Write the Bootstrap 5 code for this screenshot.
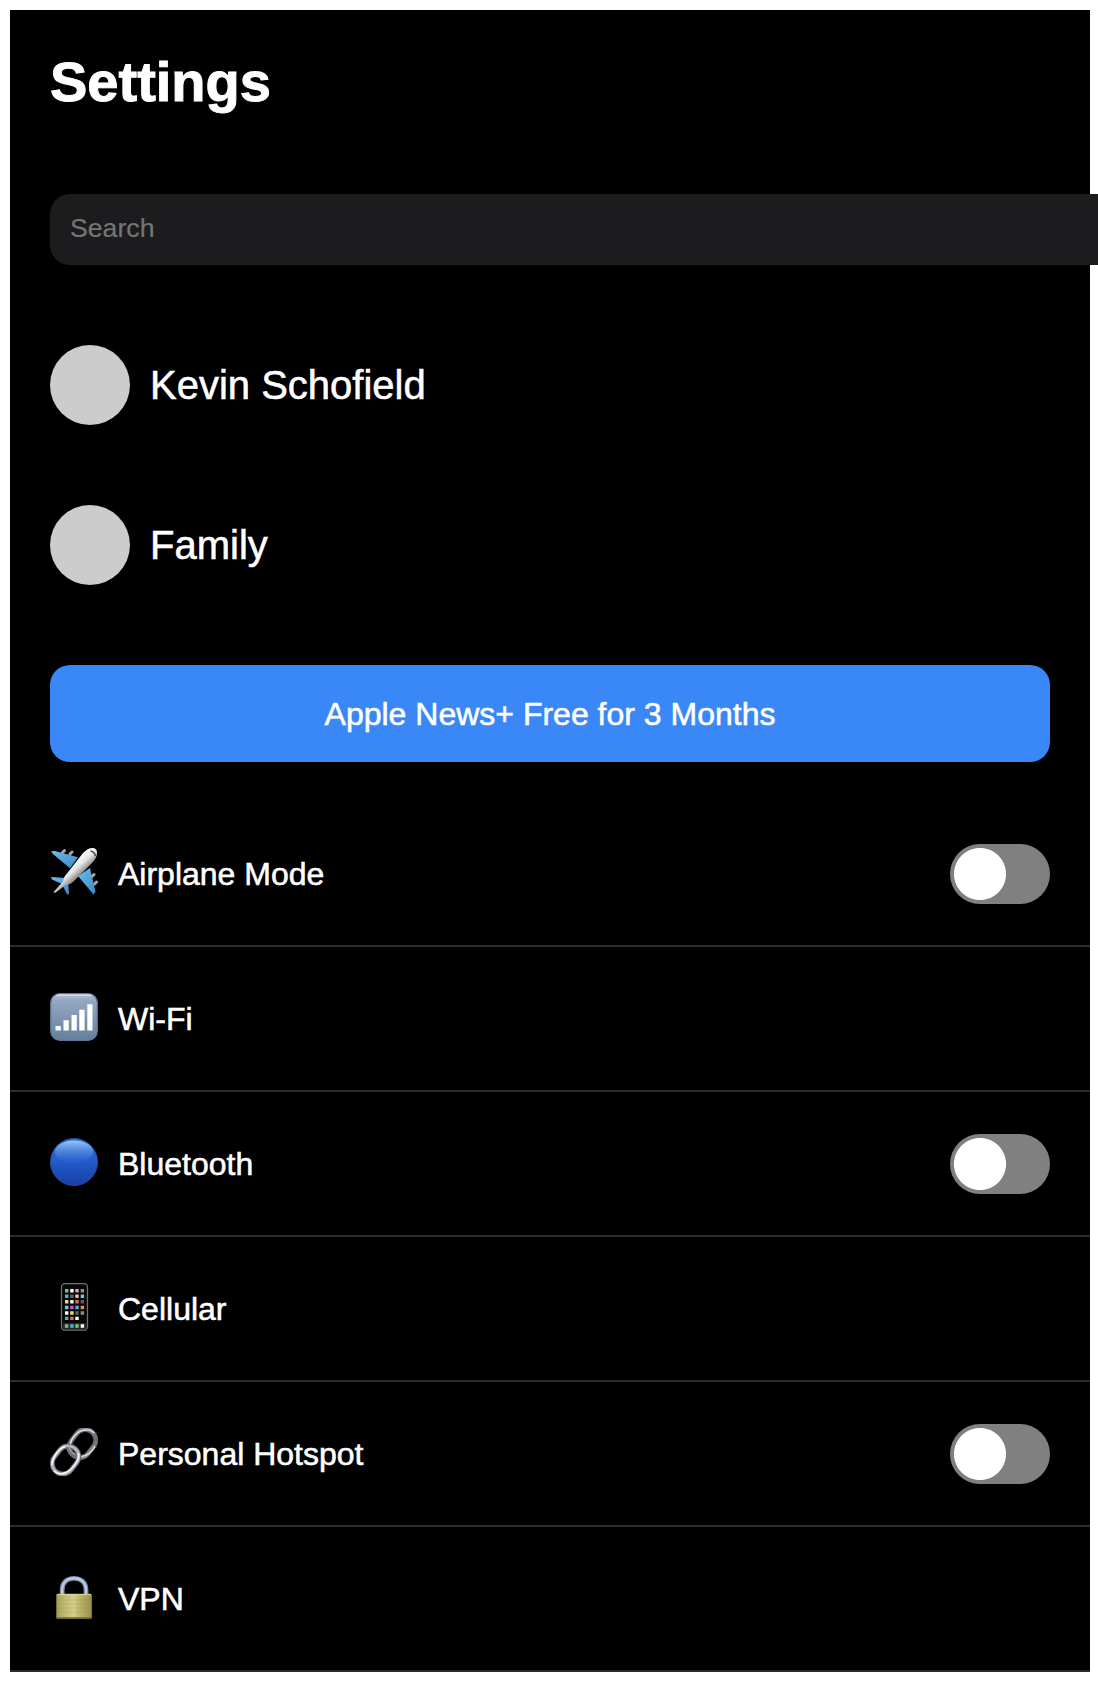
<!DOCTYPE html>
<html lang="en">
<head>
<meta charset="utf-8">
<meta name="viewport" content="width=device-width, initial-scale=1">
<title>Settings</title>
<link href="https://cdn.jsdelivr.net/npm/bootstrap@5.3.0/dist/css/bootstrap.min.css" rel="stylesheet">
<style>
html, body { overflow: hidden; }
body { padding: 10px 8px 32px 10px; background: #fff; font-family: "Liberation Sans", Arial, sans-serif; }
.panel { background: #000; color: #fff; height: 1662px; -webkit-text-stroke: .55px #fff; }
.title { font-size: 56px; line-height: 64px; padding: 40px 40px 0; height: 184px; -webkit-text-stroke: 1px #fff; }
.search-wrap { padding: 0 40px; height: 151px; }
.search-field { width: 1080px; height: 71px; flex: none; border: 0; border-radius: 20px; background: #1c1c1e; color: #fff; padding: 0 20px 2px; font-size: 26.67px; -webkit-text-stroke: .2px #757575; }
.search-field:focus { background: #1c1c1e; color: #fff; box-shadow: none; }
.search-field::placeholder { color: #757575; opacity: 1; }
.person { height: 80px; margin: 0 40px 80px; gap: 20px; font-size: 40px; line-height: 46px; }
.avatar { width: 80px; height: 80px; background: #ccc; }
.promo { height: 97px; margin: 0 40px 40px; border-radius: 20px; background: #3a87f7; font-size: 32px; line-height: 37px; padding-top: 1px; }
.list-group > .setting { height: 145px; padding: 0 40px; border: 0; border-bottom: 2px solid #2c2c2e; border-radius: 0; background: transparent; color: #fff; font-size: 32px; line-height: 37px; }
.glyph { width: 48px; height: 48px; margin: 0 20px 3px 0; flex: none; }
.setting .label-text { padding-top: 2px; }
.setting .toggle[type=checkbox] { width: 100px; height: 60px; margin: 1px 0 0 auto; border: 0; border-radius: 30px; background-color: #808080; background-image: radial-gradient(circle at 30px 30px, #fff 25.6px, transparent 26.4px); background-size: 100px 60px; background-position: 0 0; flex: none; appearance: none; }
.setting .toggle[type=checkbox]:checked { background-color: #34c759; background-image: radial-gradient(circle at 70px 30px, #fff 25.6px, transparent 26.4px); }
</style>
<script src="https://cdn.jsdelivr.net/npm/bootstrap@5.3.0/dist/js/bootstrap.bundle.min.js"></script>
</head>
<body>
<main class="panel">
  <h1 class="title fw-bold m-0">Settings</h1>
  <div class="search-wrap d-flex align-items-start">
    <input class="form-control search-field" type="text" placeholder="Search">
  </div>
  <div class="person d-flex align-items-center"><div class="avatar rounded-circle"></div><div>Kevin Schofield</div></div>
  <div class="person d-flex align-items-center"><div class="avatar rounded-circle"></div><div>Family</div></div>
  <div class="promo d-flex align-items-center justify-content-center">Apple News+ Free for 3 Months</div>

  <div class="list-group">
    <div class="list-group-item setting d-flex align-items-center">
      <svg class="glyph" viewBox="0 0 48 48">
        <defs>
          <linearGradient id="fuselage" gradientUnits="userSpaceOnUse" x1="21" y1="15" x2="31" y2="26"><stop offset="0" stop-color="#fff"/><stop offset=".5" stop-color="#e8e6e6"/><stop offset="1" stop-color="#8f8b8b"/></linearGradient>
          <linearGradient id="wing" x1="0" y1="0" x2="1" y2="1"><stop offset="0" stop-color="#6dbdea"/><stop offset="1" stop-color="#3b88c6"/></linearGradient>
        </defs>
        <g stroke="#a9a5a5" stroke-width="3" stroke-linecap="round"><path d="M12.500 4.500l2-2M20 6l2-2M42 28.500l2-2M44.500 36l2-2"/></g>
        <path d="M1 3.500l3-.7 24 6.500-8 11L3 6z" fill="url(#wing)"/>
        <path d="M40 20l5.500 24-2 2.500L28 28z" fill="url(#wing)"/>
        <path d="M1 29l16 1-4 6.500L2 31.500zM12 36l6-5 1 15-2 .5z" fill="url(#wing)"/>
        <path d="M46 1.500c2.700 3.500 0 9-3.500 13L23 34c-3 2.300-6 3-8 3.500L5 45 3.500 44 13 33.500c.5-3.500 1.500-5.500 4-8L33 5c4.500-4.500 10-6.500 13-3.500z" fill="url(#fuselage)"/>
        <path d="M40.500 3c2.700.5 4.500 2.500 5 5.200" fill="none" stroke="#4a4a50" stroke-width="1.600"/>
      </svg>
      <span class="label-text">Airplane Mode</span>
      <input class="form-check-input toggle" type="checkbox" aria-label="Airplane Mode">
    </div>
    <div class="list-group-item setting d-flex align-items-center">
      <svg class="glyph" viewBox="0 0 48 48">
        <defs><linearGradient id="signal" x1="0" y1="0" x2="0" y2="1"><stop offset="0" stop-color="#b5c4d8"/><stop offset=".15" stop-color="#93a8c2"/><stop offset="1" stop-color="#657f9f"/></linearGradient></defs>
        <rect x=".7" y=".7" width="46.600" height="46.600" rx="9" fill="url(#signal)" stroke="#617894" stroke-width="1.200"/>
        <path d="M7 2.200h34" stroke="#d4deea" stroke-width="1.400" stroke-linecap="round"/>
        <path d="M5.500 33h5.300v4.500H5.500zM13.500 27.300h5.300v10.200h-5.300zM21.500 22h5.300v15.500h-5.300zM29.300 16.700h5.300v20.800h-5.300zM37.300 11.300h5.200v26.200h-5.200z" fill="#fff"/>
      </svg>
      <span class="label-text">Wi-Fi</span>
    </div>
    <div class="list-group-item setting d-flex align-items-center">
      <svg class="glyph" viewBox="0 0 48 48">
        <defs>
          <linearGradient id="orb" x1="0" y1="0" x2="0" y2="1"><stop offset="0" stop-color="#3974c8"/><stop offset=".45" stop-color="#245dcc"/><stop offset="1" stop-color="#173fa9"/></linearGradient>
          <linearGradient id="shine" x1="0" y1="0" x2="0" y2="1"><stop offset="0" stop-color="#98c5f8"/><stop offset="1" stop-color="#3c7ce0" stop-opacity="0"/></linearGradient>
        </defs>
        <circle cx="24" cy="24" r="23.500" fill="url(#orb)" stroke="#244f9c" stroke-width="1"/>
        <ellipse cx="24" cy="14" rx="19" ry="11.500" fill="url(#shine)"/>
      </svg>
      <span class="label-text">Bluetooth</span>
      <input class="form-check-input toggle" type="checkbox" aria-label="Bluetooth">
    </div>
    <div class="list-group-item setting d-flex align-items-center">
      <svg class="glyph" viewBox="0 0 48 48">
        <rect x="11.500" y=".7" width="26" height="46.500" rx="3.500" fill="#080808" stroke="#727272" stroke-width="1.300"/>
        <rect x="12.500" y="40" width="24" height="6" rx="1.500" fill="#292929"/>
        <g stroke-width="3.400">
          <path d="M15 7.700h3.400M14.900 43h3.400M25.300 43h3.400" stroke="#72c77a"/>
          <path d="M20.200 7.700h3.400M30.700 43h3.400M15 30h3.400M25.300 35.400h3.400" stroke="#fff"/>
          <path d="M25.300 7.700h3.400" stroke="#dda4df"/>
          <path d="M30.700 7.700h3.400M30.700 30h3.400" stroke="#918c91"/>
          <path d="M15 13.200h3.400M15 35.400h3.400M25.300 24.500h3.400M20.200 43h3.400" stroke="#50afd9"/>
          <path d="M20.200 13.200h3.400M30.700 18.800h3.400M25.300 30h3.400" stroke="#606060"/>
          <path d="M25.300 13.200h3.400" stroke="#edc69e"/>
          <path d="M30.700 13.200h3.400M15 24.500h3.400" stroke="#69cbd6"/>
          <path d="M15 18.800h3.400M20.200 30h3.400" stroke="#f0db75"/>
          <path d="M20.200 18.800h3.400" stroke="#fff"/>
          <path d="M25.300 18.800h3.400M20.200 35.400h3.400" stroke="#df6b5b"/>
          <path d="M20.200 24.500h3.400" stroke="#c05bd1"/>
          <path d="M30.700 24.500h3.400" stroke="#e9943e"/>
        </g>
      </svg>
      <span class="label-text">Cellular</span>
    </div>
    <div class="list-group-item setting d-flex align-items-center">
      <svg class="glyph" viewBox="0 0 48 48">
        <defs>
          <linearGradient id="steel" x1="0" y1="0" x2="1" y2="1"><stop offset="0" stop-color="#8e929b"/><stop offset=".5" stop-color="#706c6e"/><stop offset="1" stop-color="#a09c9f"/></linearGradient>
        </defs>
        <g fill="none">
          <g transform="rotate(38 32.500 15.500)"><rect x="21.900" y=".5" width="21.200" height="30" rx="10.600" stroke="#625e61" stroke-width="5"/><rect x="21.900" y=".5" width="21.200" height="30" rx="10.600" stroke="url(#steel)" stroke-width="3.200"/></g>
          <path d="M20 17C21 10 27 3.500 34 2.200c4-.7 8 .3 10.300 3M31 28.300c5 .5 11-4 14-10" stroke="#e2e7f0" stroke-width="1.300"/>
          <g transform="rotate(38 15.500 32)"><rect x="4.900" y="17" width="21.200" height="30" rx="10.600" stroke="#68676c" stroke-width="5"/><rect x="4.900" y="17" width="21.200" height="30" rx="10.600" stroke="#b4b8c2" stroke-width="2.800"/></g>
          <path d="M2 37C2.500 29 8 21 15 18.600M4 43c4.500 4.500 12 3.200 17-2 5-5 8.500-11 7.500-16" stroke="#f4f7ff" stroke-width="1.600"/>
          <path d="M18 19c.5 4 3.500 7.800 8.500 9" stroke="#777276" stroke-width="4"/>
          <path d="M19 19c.7 3.500 3 6 6.500 7.200" stroke="#b8b5ba" stroke-width="1"/>
        </g>
      </svg>
      <span class="label-text">Personal Hotspot</span>
      <input class="form-check-input toggle" type="checkbox" aria-label="Personal Hotspot">
    </div>
    <div class="list-group-item setting d-flex align-items-center">
      <svg class="glyph" viewBox="0 0 48 48">
        <defs>
          <linearGradient id="brass" x1="0" y1="0" x2="1" y2="0"><stop offset="0" stop-color="#a19a53"/><stop offset=".15" stop-color="#b9b26b"/><stop offset=".5" stop-color="#d5cf8e"/><stop offset=".6" stop-color="#c3bc75"/><stop offset="1" stop-color="#999149"/></linearGradient>
        </defs>
        <path d="M12.200 22v-5C12.200 9.500 17 5.300 24 5.300S36 9.500 36 17v5" fill="none" stroke="#7888a5" stroke-width="4.800"/>
        <path d="M12.200 22v-5C12.200 9.500 17 5.300 24 5.300S36 9.500 36 17v5" fill="none" stroke="#bccbe0" stroke-width="2.400"/>
        <rect x="6.300" y="20.800" width="35.500" height="25" rx="1.500" fill="url(#brass)"/>
        <path d="M7 21.600h34" stroke="#ddd794" stroke-width="1"/>
        <path d="M7 27h34M7 31h34M7 35h34M7 39h34" stroke="#7f7737" stroke-opacity=".2"/>
        <path d="M7 45h34" stroke="#6b642c" stroke-width="1.600"/>
      </svg>
      <span class="label-text">VPN</span>
    </div>
  </div>
</main>
</body>
</html>
